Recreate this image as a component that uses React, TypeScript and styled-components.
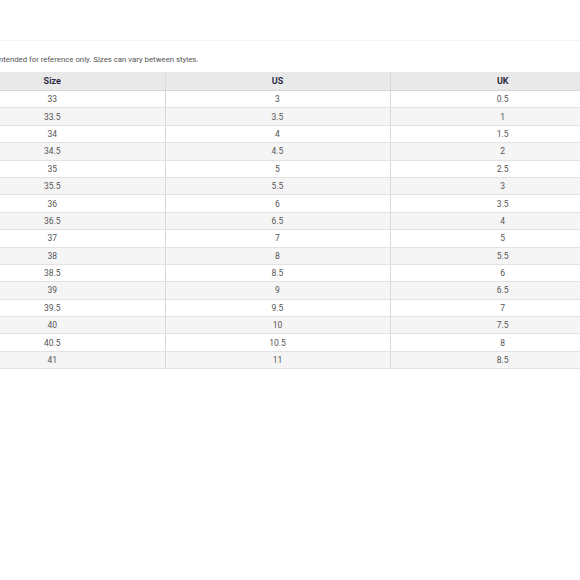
import React from "react";
import styled, { createGlobalStyle } from "styled-components";

const GlobalStyle = createGlobalStyle`
    html, body {
        margin: 0;
        padding: 0;
        background: #ffffff;
        overflow: hidden;
    }
    body {
        font-family: Roboto, "Liberation Sans", sans-serif;
    }
`;

const Page = styled.div`
    width: 580px;
    height: 580px;
    overflow: hidden;
    background: #fff;
`;

const TopRule = styled.div`
    height: 40px;
    border-bottom: 1px solid #f3f3f3;
`;

const Note = styled.p`
    margin: 14px 0 0 -3px;
    font-size: 7.8px;
    line-height: 10px;
    color: #555;
    white-space: nowrap;
`;

const Table = styled.table`
    margin: 7px 0 0 -60px;
    width: 675px;
    border-collapse: collapse;
    table-layout: fixed;
    font-size: 8.5px;
`;

const HeadCell = styled.th`
    height: 18px;
    padding: 0;
    background: #e9e9e9;
    color: #2e2c48;
    font-weight: 700;
    font-size: 9px;
    text-align: center;
    border-bottom: 1px solid #d6d6d6;
    border-left: 1px solid #d9d9d9;
    &:first-child { border-left: none; }
`;

const Row = styled.tr<{ $shaded: boolean }>`
    background: ${p => (p.$shaded ? "#f5f5f5" : "#ffffff")};
`;

const Cell = styled.td`
    height: 16.4px;
    padding: 0;
    color: #555;
    text-align: center;
    border-bottom: 1px solid #e2e2e2;
    border-left: 1px solid #d9d9d9;
    &:first-child { border-left: none; }
`;

const rows: [string, string, string][] = [
    ["33", "3", "0.5"],
    ["33.5", "3.5", "1"],
    ["34", "4", "1.5"],
    ["34.5", "4.5", "2"],
    ["35", "5", "2.5"],
    ["35.5", "5.5", "3"],
    ["36", "6", "3.5"],
    ["36.5", "6.5", "4"],
    ["37", "7", "5"],
    ["38", "8", "5.5"],
    ["38.5", "8.5", "6"],
    ["39", "9", "6.5"],
    ["39.5", "9.5", "7"],
    ["40", "10", "7.5"],
    ["40.5", "10.5", "8"],
    ["41", "11", "8.5"],
];

const App: React.FC = () => {
    return (
        <Page>
            <GlobalStyle />
            <TopRule />
            <Note>intended for reference only. Sizes can vary between styles.</Note>
            <Table>
                <thead>
                    <tr>
                        <HeadCell>Size</HeadCell>
                        <HeadCell>US</HeadCell>
                        <HeadCell>UK</HeadCell>
                    </tr>
                </thead>
                <tbody>
                    {rows.map((r, i) => (
                        <Row key={r[0]} $shaded={i % 2 === 1}>
                            <Cell>{r[0]}</Cell>
                            <Cell>{r[1]}</Cell>
                            <Cell>{r[2]}</Cell>
                        </Row>
                    ))}
                </tbody>
            </Table>
        </Page>
    );
};

export default App;
